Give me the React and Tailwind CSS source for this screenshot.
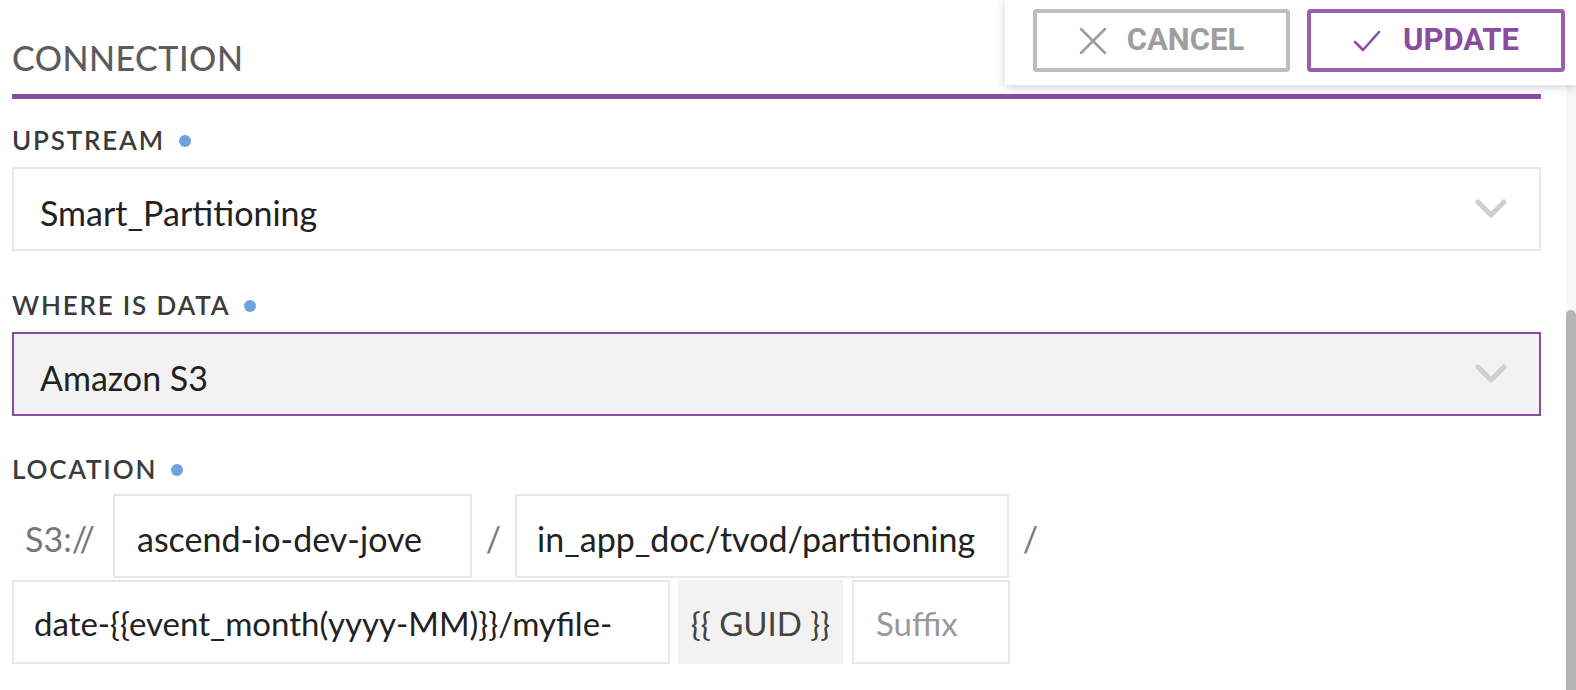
const Chevron = () => (
  <svg width="32" height="20" viewBox="0 0 32 20" className="shrink-0">
    <polyline points="3,3 16,16 29,3" fill="none" stroke="#cfcfcf" strokeWidth="5" strokeLinecap="round" strokeLinejoin="round" />
  </svg>
);

const Label = ({ children }) => (
  <div className="flex items-center h-[25px] text-[26px] leading-[25px] font-semibold tracking-[1.8px] text-[#3b3b3b]">
    <span>{children}</span>
    <span className="ml-[14px] w-[12px] h-[12px] rounded-full bg-[#6fa3e0]" />
  </div>
);

const Select = ({ value, active }) => (
  <div
    className={
      active
        ? "flex items-center justify-between h-[84px] pl-[26px] pr-[32px] border-2 border-[#8b4c9f] bg-[#f2f2f2]"
        : "flex items-center justify-between h-[84px] pl-[26px] pr-[32px] border-2 border-[#e8e8e8] bg-white"
    }
  >
    <span className="pt-[6px] text-[34px] text-[#222]">{value}</span>
    <Chevron />
  </div>
);

export default function App() {
  return (
    <div className="relative w-[1576px] h-[690px] bg-white overflow-hidden font-['Lato',sans-serif]">
      <div className="pl-3 pr-[35px]">
        <div className="h-[94px] pt-[41px]">
          <h2 className="text-[34px] leading-[34px] font-medium text-[#5c5c5c] tracking-[0.5px]">CONNECTION</h2>
        </div>
        <div className="h-[5px] bg-[#8b4c9f]" />

        <div className="mt-[29px]">
          <Label>UPSTREAM</Label>
        </div>
        <div className="mt-[14px]">
          <Select value="Smart_Partitioning" />
        </div>

        <div className="mt-[42px]">
          <Label>WHERE IS DATA</Label>
        </div>
        <div className="mt-[14px]">
          <Select value="Amazon S3" active />
        </div>

        <div className="mt-[41px]">
          <Label>LOCATION</Label>
        </div>
        <div className="mt-[12px] flex items-center h-[84px] text-[34px]">
          <span className="w-[101px] pl-[13px] pt-[4px] text-[#777]">S3://</span>
          <div className="w-[359px] h-full flex items-center pl-[22px] pt-[4px] border-2 border-[#e8e8e8] text-[#222]">ascend-io-dev-jove</div>
          <span className="w-[43px] text-center pt-[4px] text-[#777]">/</span>
          <div className="w-[494px] h-full flex items-center pl-[20px] pt-[4px] border-2 border-[#e8e8e8] text-[#222]">in_app_doc/tvod/partitioning</div>
          <span className="w-[43px] text-center pt-[4px] text-[#777]">/</span>
        </div>
        <div className="mt-[2px] flex h-[84px] text-[33px]">
          <div className="w-[658px] h-full flex items-center pl-[20px] pt-[4px] border-2 border-[#e8e8e8] text-[#222]">date-{"{{"}event_month(yyyy-MM){"}}"}/myfile-</div>
          <div className="ml-[8px] w-[165px] h-full flex items-center justify-center pt-[4px] bg-[#f2f2f2] text-[#444]">{"{{ GUID }}"}</div>
          <div className="ml-[9px] w-[158px] h-full flex items-center pl-[22px] pt-[4px] border-2 border-[#e8e8e8] text-[#999]">Suffix</div>
        </div>
      </div>

      {/* scrollbar */}
      <div className="absolute right-0 top-[85px] bottom-0 w-[10px] bg-[#f7f7f7]">
        <div className="absolute left-0 right-0 top-[225px] bottom-0 rounded-t-[5px] bg-[#b5b5b5]" />
      </div>

      {/* floating action bar */}
      <div className="absolute top-0 right-0 w-[571px] h-[85px] bg-white shadow-[0_2px_10px_rgba(0,0,0,0.18)] flex items-start gap-[17px] pt-[9px] pl-[28px] font-['Roboto',sans-serif]">
        <button className="w-[257px] h-[63px] flex items-center justify-center gap-[20px] border-4 border-[#bdbdbd] rounded-[4px] text-[#9e9e9e] text-[31px] font-bold">
          <svg width="28" height="28" viewBox="0 0 28 28">
            <path d="M2 2 L26 26 M26 2 L2 26" stroke="#9e9e9e" strokeWidth="2.5" strokeLinecap="round" />
          </svg>
          <span>CANCEL</span>
        </button>
        <button className="w-[258px] h-[63px] flex items-center justify-center gap-[22px] border-4 border-[#995fae] rounded-[4px] text-[#8a4c9e] text-[31px] font-bold">
          <svg width="28" height="22" viewBox="0 0 28 22">
            <path d="M2 12 L10 20 L26 2" fill="none" stroke="#8a4c9e" strokeWidth="2.5" strokeLinecap="round" strokeLinejoin="round" />
          </svg>
          <span>UPDATE</span>
        </button>
      </div>
    </div>
  );
}
